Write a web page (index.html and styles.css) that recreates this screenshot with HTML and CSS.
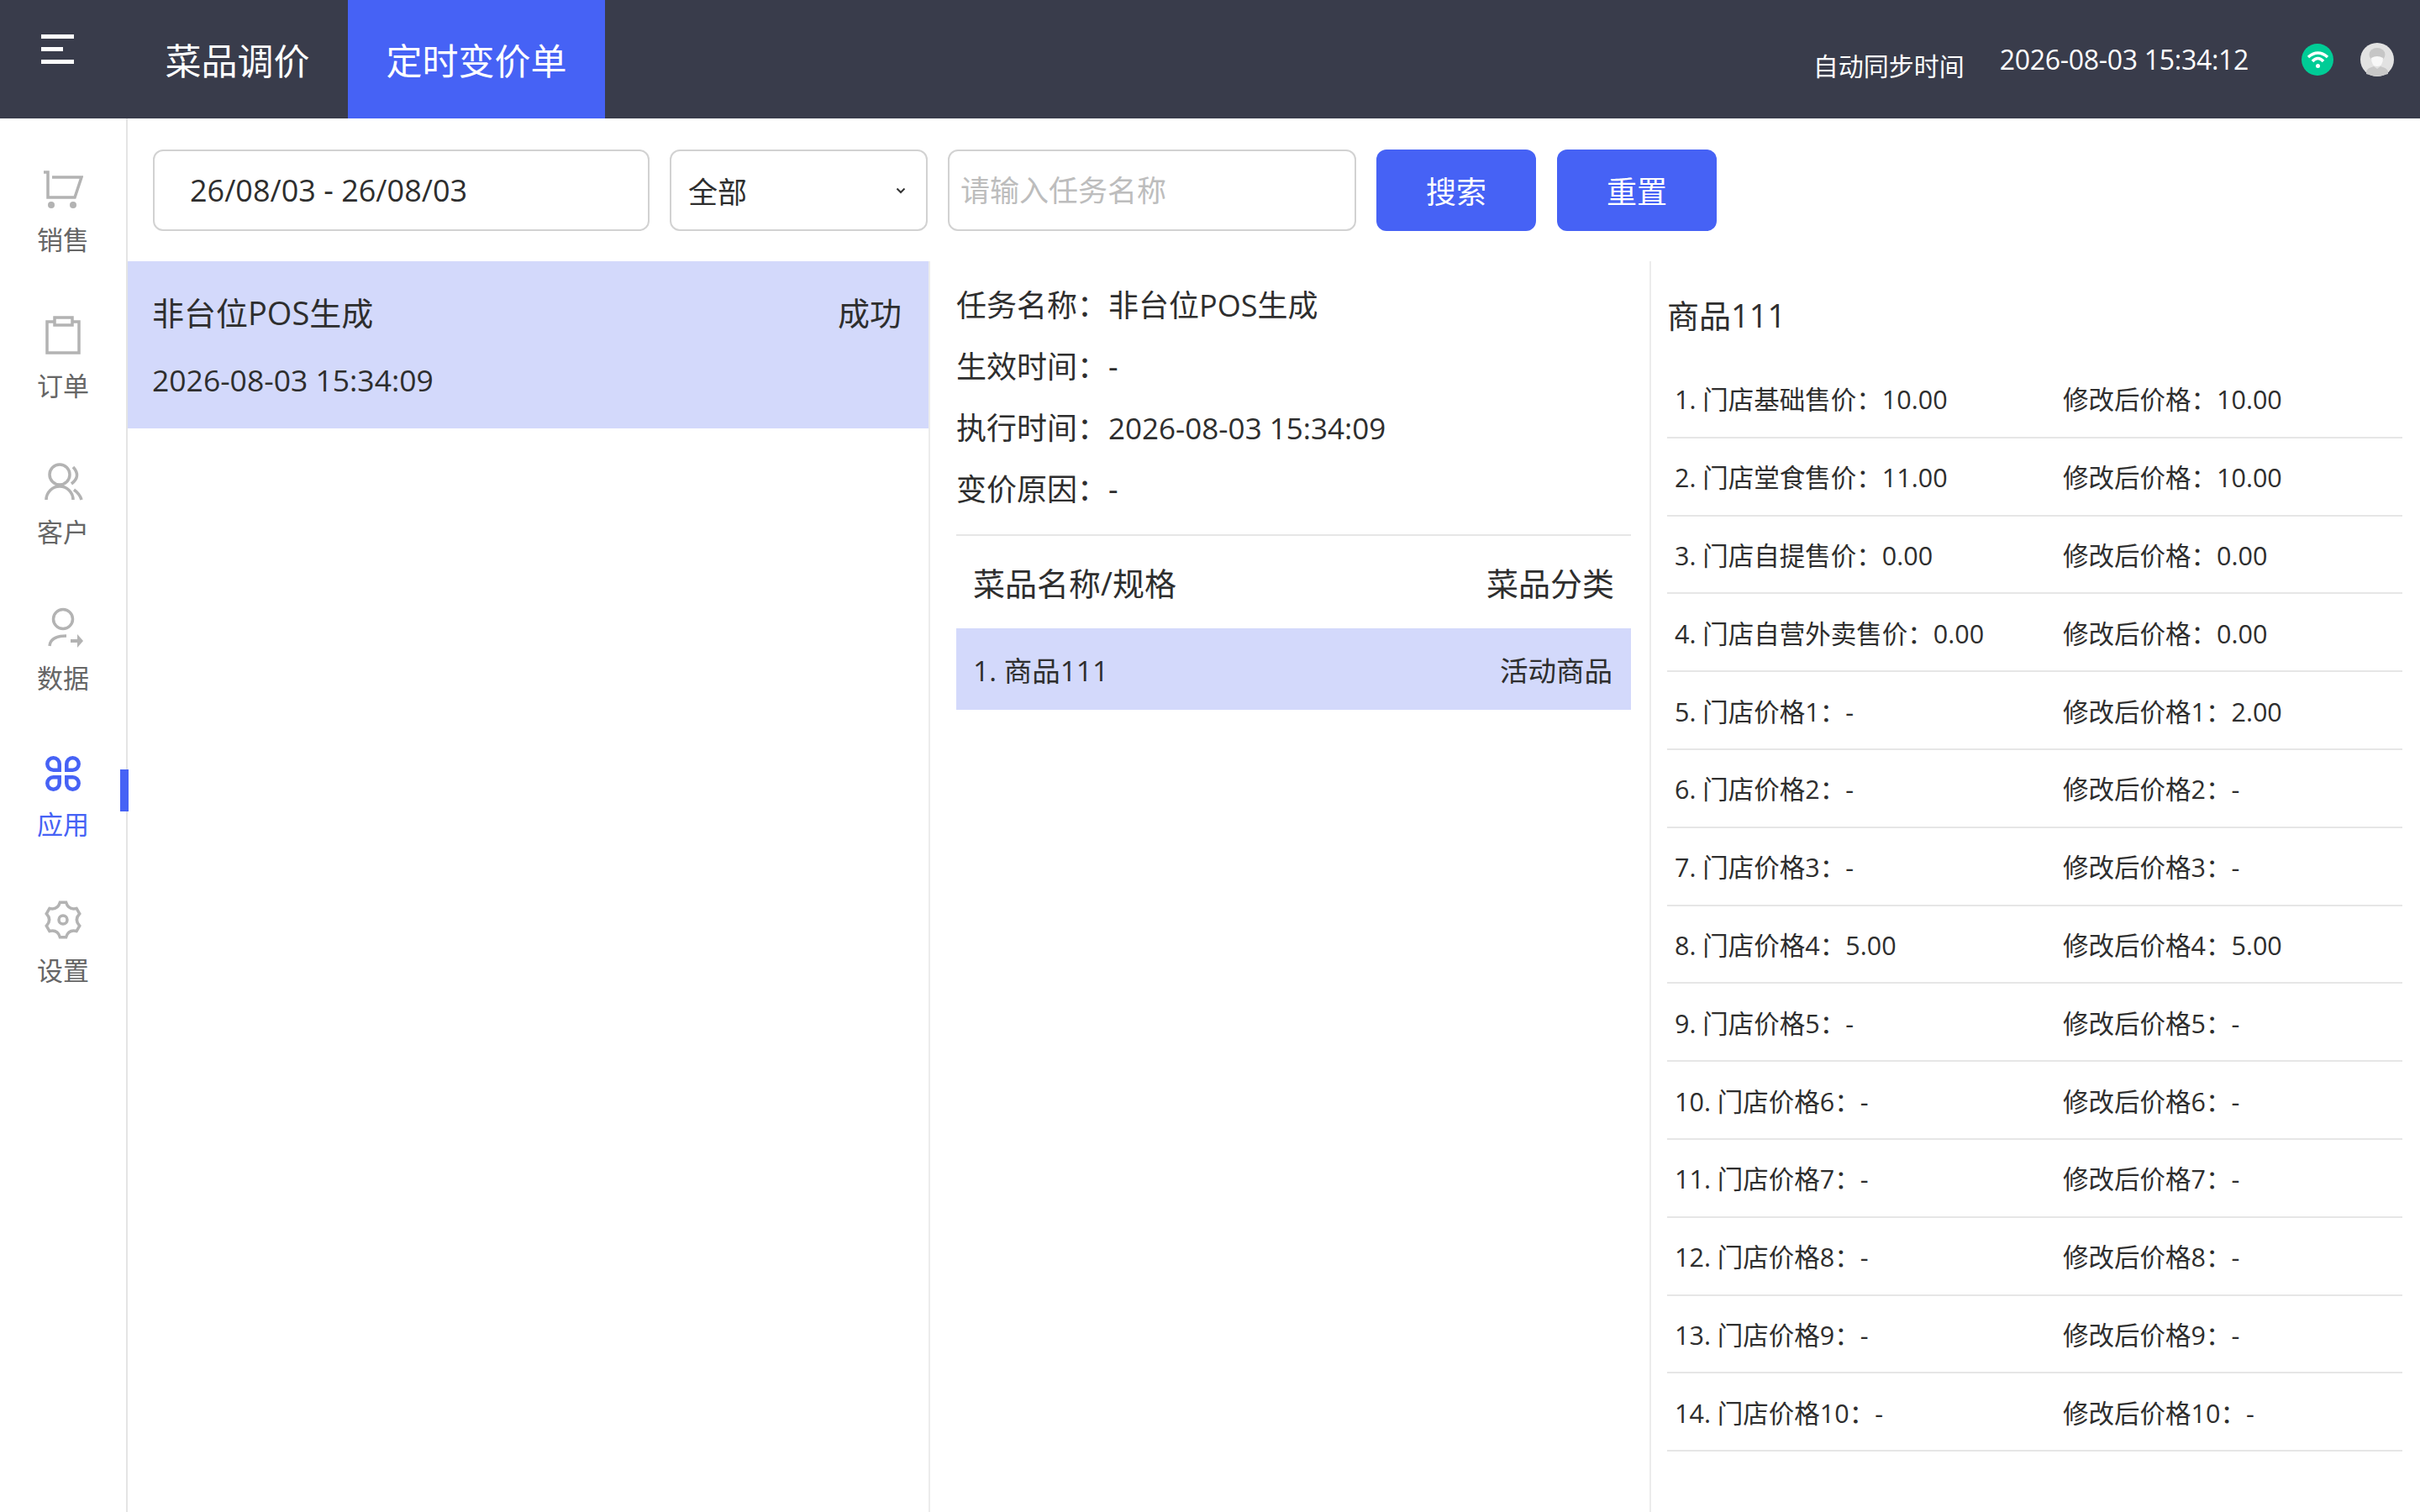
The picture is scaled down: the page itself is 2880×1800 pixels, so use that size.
FILE: index.html
```html
<!DOCTYPE html>
<html lang="zh-CN">
<head>
	<meta charset="UTF-8">
	<title>定时变价单</title>
	<link rel="stylesheet" href="styles.css">
</head>
<body>
	<header class="topbar">
		<div class="menu-btn">
			<span class="menu-line"></span>
			<span class="menu-line menu-line-short"></span>
			<span class="menu-line"></span>
		</div>
		<div class="tab">菜品调价</div>
		<div class="tab tab-active">定时变价单</div>
		<div class="topbar-right">
			<span class="sync-label">自动同步时间</span>
			<span class="sync-time">2026-08-03 15:34:12</span>
			<svg class="wifi" viewBox="0 0 38 38">
				<circle cx="19" cy="19" r="19" fill="#00cc96"/>
				<path d="M8 16 Q19.500 6 31 16" fill="none" stroke="#fff" stroke-width="3.500"/>
				<path d="M13 21 Q19.500 14 26 21" fill="none" stroke="#fff" stroke-width="3.500"/>
				<circle cx="19.500" cy="26.500" r="2.500" fill="#fff"/>
			</svg>
			<svg class="avatar" viewBox="0 0 40 40">
				<circle cx="20" cy="20" r="20" fill="#e2e2e2"/>
				<ellipse cx="20" cy="14" rx="9.500" ry="8" fill="#c6c6c6"/>
				<path d="M7 37 V34 Q8 30 16 28 L20 31 L24 28 Q32 30 33 34 V37 Q20 42 7 37 Z" fill="#c8c8c8"/>
				<path d="M13 18 Q20 14 27 18 Q27 28 20 28 Q13 28 13 18 Z" fill="#f8f8f8"/>
			</svg>
		</div>
	</header>

	<div class="layout">
		<nav class="sidebar">
			<div class="nav-item">
				<svg class="nav-icon" viewBox="0 0 48 48">
					<path d="M1 4 H6 V34 H38 L46 10 H11"/>
					<circle class="dot" cx="10" cy="43" r="4"/>
					<circle class="dot" cx="36" cy="43" r="4"/>
				</svg>
				<span class="nav-label">销售</span>
			</div>
			<div class="nav-item">
				<svg class="nav-icon" viewBox="0 0 48 48">
					<path d="M14 8 H5 V45 H43 V8 H35"/>
					<rect x="14" y="3" width="21" height="9"/>
				</svg>
				<span class="nav-label">订单</span>
			</div>
			<div class="nav-item">
				<svg class="nav-icon" viewBox="0 0 48 48">
					<circle cx="20" cy="16" r="12"/>
					<path d="M4 46 A16 16 0 0 1 36 46"/>
					<path d="M36 7 Q46 18 34 27"/>
					<path d="M37 34 Q44 39 46 46"/>
				</svg>
				<span class="nav-label">客户</span>
			</div>
			<div class="nav-item">
				<svg class="nav-icon" viewBox="0 0 48 48">
					<circle cx="24" cy="14" r="11.500"/>
					<path d="M8 46 Q9 34 28 34"/>
					<path class="dot" d="M33 38 H41 V32 L48 40 L41 48 V42 H33 Z"/>
				</svg>
				<span class="nav-label">数据</span>
			</div>
			<div class="nav-item nav-item-active">
				<svg class="nav-icon nav-icon-bold" viewBox="0 0 48 48">
					<path d="M12.500 5.300 A7.200 7.200 0 0 1 19.700 12.500 V19.700 H12.500 A7.200 7.200 0 0 1 12.500 5.300 Z"/>
					<path d="M35.500 5.300 A7.200 7.200 0 0 0 28.300 12.500 V19.700 H35.500 A7.200 7.200 0 0 0 35.500 5.300 Z"/>
					<path d="M12.500 42.700 A7.200 7.200 0 0 0 19.700 35.500 V28.300 H12.500 A7.200 7.200 0 0 0 12.500 42.700 Z"/>
					<path d="M35.500 42.700 A7.200 7.200 0 0 1 28.300 35.500 V28.300 H35.500 A7.200 7.200 0 0 1 35.500 42.700 Z"/>
				</svg>
				<span class="nav-label">应用</span>
				<span class="nav-mark"></span>
			</div>
			<div class="nav-item">
				<svg class="nav-icon" viewBox="0 0 48 48">
					<path d="M20.400 3.300 L27.600 3.300 Q30.500 12.700 40.100 10.500 L43.700 16.800 Q37 24 43.700 31.200 L40.100 37.500 Q30.500 35.300 27.600 44.700 L20.400 44.700 Q17.500 35.300 7.900 37.500 L4.300 31.200 Q11 24 4.300 16.800 L7.900 10.500 Q17.500 12.700 20.400 3.300 Z"/>
					<circle cx="24" cy="24" r="5"/>
				</svg>
				<span class="nav-label">设置</span>
			</div>
		</nav>

		<main class="content">
			<div class="filters">
				<div class="field field-date">26/08/03 - 26/08/03</div>
				<div class="field field-select">
					<span>全部</span>
					<svg class="chevron" viewBox="0 0 12 8"><path d="M1.500 1.500 L6 6 L10.500 1.500"/></svg>
				</div>
				<input class="field field-input" type="text" placeholder="请输入任务名称">
				<button class="btn">搜索</button>
				<button class="btn">重置</button>
			</div>

			<div class="panels">
				<section class="task-list">
					<div class="task task-active">
						<div class="task-top">
							<span>非台位POS生成</span>
							<span>成功</span>
						</div>
						<div class="task-time">2026-08-03 15:34:09</div>
					</div>
				</section>

				<section class="task-detail">
					<div class="info">
						<p>任务名称：<span class="info-val">非台位POS生成</span></p>
						<p>生效时间：<span class="info-val">-</span></p>
						<p>执行时间：<span class="info-val info-time">2026-08-03 15:34:09</span></p>
						<p>变价原因：<span class="info-val">-</span></p>
					</div>
					<div class="goods-head">
						<span>菜品名称/规格</span>
						<span>菜品分类</span>
					</div>
					<div class="goods-row">
						<span>1. 商品111</span>
						<span>活动商品</span>
					</div>
				</section>

				<section class="prices">
					<h2 class="prices-title">商品111</h2>
					<ul class="price-list">
						<li><span>1. 门店基础售价：10.00</span><span>修改后价格：10.00</span></li>
						<li><span>2. 门店堂食售价：11.00</span><span>修改后价格：10.00</span></li>
						<li><span>3. 门店自提售价：0.00</span><span>修改后价格：0.00</span></li>
						<li><span>4. 门店自营外卖售价：0.00</span><span>修改后价格：0.00</span></li>
						<li><span>5. 门店价格1：-</span><span>修改后价格1：2.00</span></li>
						<li><span>6. 门店价格2：-</span><span>修改后价格2：-</span></li>
						<li><span>7. 门店价格3：-</span><span>修改后价格3：-</span></li>
						<li><span>8. 门店价格4：5.00</span><span>修改后价格4：5.00</span></li>
						<li><span>9. 门店价格5：-</span><span>修改后价格5：-</span></li>
						<li><span>10. 门店价格6：-</span><span>修改后价格6：-</span></li>
						<li><span>11. 门店价格7：-</span><span>修改后价格7：-</span></li>
						<li><span>12. 门店价格8：-</span><span>修改后价格8：-</span></li>
						<li><span>13. 门店价格9：-</span><span>修改后价格9：-</span></li>
						<li><span>14. 门店价格10：-</span><span>修改后价格10：-</span></li>
					</ul>
				</section>
			</div>
		</main>
	</div>
</body>
</html>
```

FILE: styles.css
```css
* {
	box-sizing: border-box;
}
html, body {
	margin: 0;
	height: 100%;
	overflow: hidden;
}
body {
	display: flex;
	flex-direction: column;
	background: #fff;
	color: #2e2e2e;
	font-family: "Open Sans", "Noto Sans CJK SC", sans-serif;
}
p, h2, ul {
	margin: 0;
	padding: 0;
}
li {
	list-style: none;
}

/* top bar */
.topbar {
	display: flex;
	height: 141px;
	flex-shrink: 0;
	background: #393c4b;
	color: #fff;
}
.menu-btn {
	width: 151px;
	padding: 41px 0 0 49px;
}
.menu-line {
	display: block;
	width: 39px;
	height: 5px;
	margin-bottom: 10px;
	background: #fff;
}
.menu-line-short {
	width: 26px;
}
.tab {
	display: flex;
	align-items: center;
	padding: 0 45.500px;
	font-size: 43px;
}
.tab-active {
	background: #4662f5;
}
.topbar-right {
	display: flex;
	align-items: center;
	margin-left: auto;
	padding-right: 31px;
}
.sync-label {
	margin: 12px 42px 0 0;
	font-size: 30px;
}
.sync-time {
	font-size: 32px;
	letter-spacing: -0.3px;
}
.wifi {
	width: 38px;
	height: 38px;
	margin-left: 63px;
}
.avatar {
	width: 40px;
	height: 40px;
	margin-left: 32px;
}

.layout {
	display: flex;
	flex: 1;
	min-height: 0;
}

/* left nav */
.sidebar {
	display: flex;
	flex-direction: column;
	gap: 70px;
	width: 152px;
	flex-shrink: 0;
	padding-top: 60px;
	border-right: 2px solid #e4e4e4;
}
.nav-item {
	position: relative;
	display: flex;
	flex-direction: column;
	align-items: center;
	color: #666;
}
.nav-icon {
	width: 48px;
	height: 48px;
	fill: none;
	stroke: #b3b3b3;
	stroke-width: 3.500;
}
.nav-icon .dot {
	fill: #b3b3b3;
	stroke: none;
}
.nav-label {
	margin-top: 16px;
	font-size: 31px;
	line-height: 40px;
}
.nav-item-active {
	color: #4662f5;
}
.nav-item-active .nav-icon {
	stroke: #4662f5;
}
.nav-icon-bold {
	stroke-width: 4.500;
}
.nav-mark {
	position: absolute;
	top: 19px;
	right: -3px;
	width: 10px;
	height: 50px;
	background: #4662f5;
}

.content {
	display: flex;
	flex-direction: column;
	flex: 1;
	min-width: 0;
}

/* filter row */
.filters {
	display: flex;
	gap: 24px;
	height: 97px;
	margin: 37px 0 36px 30px;
}
.field {
	display: flex;
	align-items: center;
	height: 97px;
	border: 2px solid #d2d2d2;
	border-radius: 12px;
	background: #fff;
	color: #2e2e2e;
	font-family: inherit;
	font-size: 36px;
}
.field-date {
	width: 591px;
	padding-left: 42px;
}
.field-select {
	justify-content: space-between;
	width: 307px;
	padding: 0 24px 0 20px;
	font-size: 35px;
}
.field-input {
	width: 486px;
	padding: 0 13px;
	font-size: 35px;
	outline: none;
}
.field-input::placeholder {
	color: #bdbdbd;
}
.chevron {
	width: 12px;
	height: 8px;
	fill: none;
	stroke: #333;
	stroke-width: 2;
}
.btn {
	width: 190px;
	height: 97px;
	border: 0;
	border-radius: 12px;
	background: #4662f5;
	color: #fff;
	font-family: inherit;
	font-size: 36px;
}
.filters .btn + .btn {
	margin-left: 1px;
}

.panels {
	display: flex;
	flex: 1;
	min-height: 0;
}

/* task list */
.task-list {
	width: 955px;
	flex-shrink: 0;
	border-right: 2px solid #ececec;
}
.task {
	height: 199px;
	padding: 33px 32px 0 29px;
}
.task-active {
	background: #d3d9fb;
}
.task-top {
	display: flex;
	justify-content: space-between;
	font-size: 38px;
	line-height: 56px;
}
.task-time {
	margin-top: 24px;
	font-size: 35.500px;
	line-height: 56px;
}

/* task detail */
.task-detail {
	width: 858px;
	flex-shrink: 0;
	padding: 16px 22px 0 31px;
	border-right: 2px solid #ececec;
}
.info {
	padding-bottom: 17px;
	border-bottom: 2px solid #e6e6e6;
}
.info p {
	font-size: 36px;
	line-height: 73px;
}
.info-val {
	margin-left: 1px;
}
.info-time {
	font-size: 35px;
}
.goods-head {
	display: flex;
	justify-content: space-between;
	align-items: center;
	height: 110px;
	padding: 0 20px 2px;
	font-size: 38px;
}
.goods-row {
	display: flex;
	justify-content: space-between;
	align-items: center;
	height: 97px;
	padding: 0 22px 0 20px;
	background: #d3d9fb;
	font-size: 33.500px;
}

/* price list */
.prices {
	flex: 1;
	min-width: 0;
	padding: 0 21px 0 19px;
}
.prices-title {
	height: 118px;
	padding-top: 32px;
	font-size: 38px;
	font-weight: 400;
	line-height: 64px;
}
.price-list li {
	display: grid;
	grid-template-columns: 462px 1fr;
	align-items: center;
	height: 92.800px;
	padding-left: 9px;
	border-bottom: 2px solid #e6e6e6;
	font-size: 30.500px;
}
```
